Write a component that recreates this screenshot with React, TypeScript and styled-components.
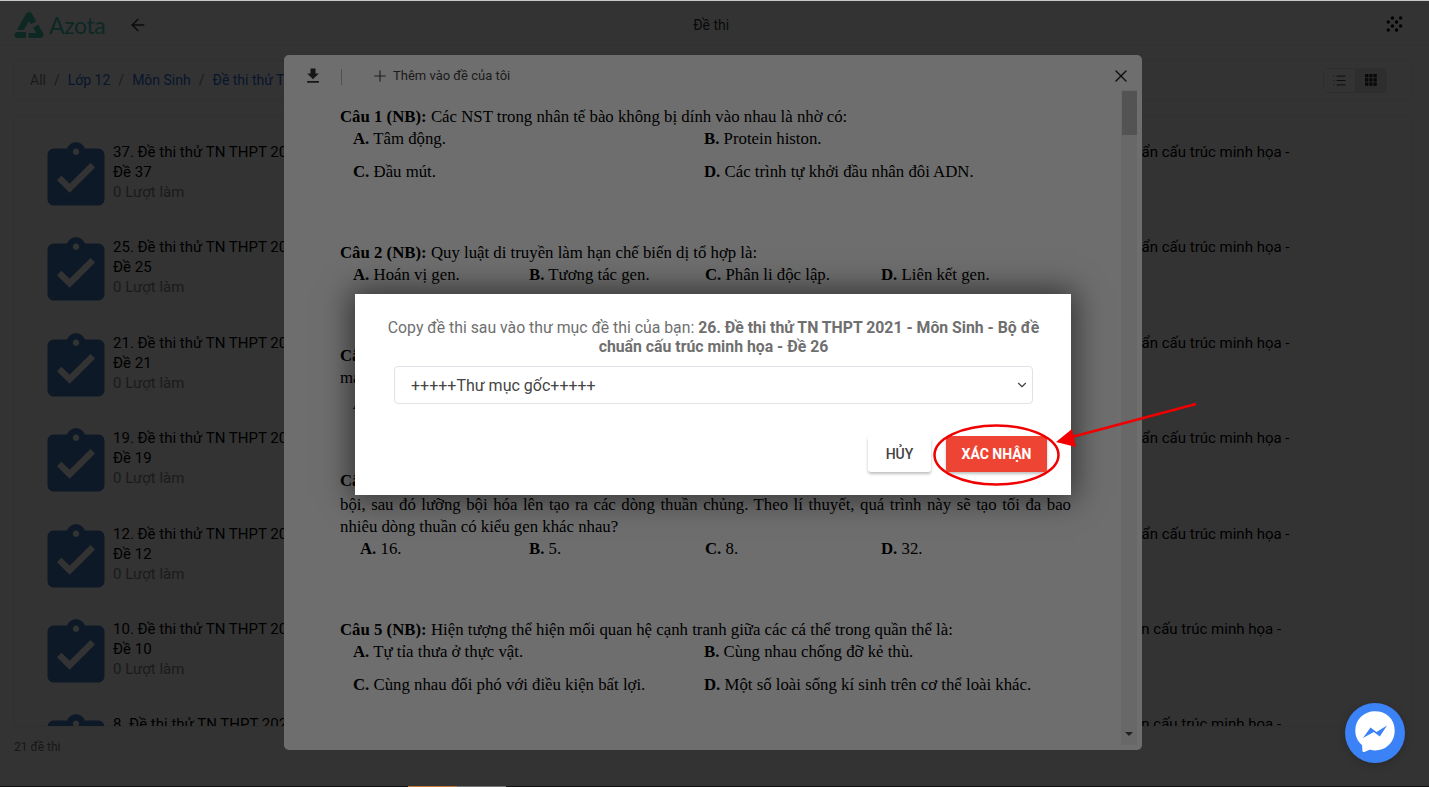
import React from "react";
import styled, { createGlobalStyle } from "styled-components";
import { ArrowLeft, Plus, X, List, ChevronDown } from "lucide-react";

const GlobalStyle = createGlobalStyle`
  html, body {
    margin: 0;
    padding: 0;
    height: 100%;
    overflow: hidden;
    background: #fff;
    font-family: Roboto, "Liberation Sans", sans-serif;
  }
  * { box-sizing: border-box; }
`;

const leftRows = [37, 25, 21, 19, 12, 10, 8];
const rightRows = [36, 26, 22, 20, 13, 9, 7];

function ClipboardIcon() {
  return (
    <svg width="76" height="76" viewBox="0 0 24 24" fill="currentColor">
      <path d="M19 3h-4.18C14.4 1.84 13.3 1 12 1c-1.3 0-2.4.84-2.82 2H5c-1.1 0-2 .9-2 2v14c0 1.1.9 2 2 2h14c1.1 0 2-.9 2-2V5c0-1.1-.9-2-2-2zm-7 0c.55 0 1 .45 1 1s-.45 1-1 1-1-.45-1-1 .45-1 1-1zm-2 14l-4-4 1.41-1.41L10 14.17l6.59-6.59L18 9l-8 8z" />
    </svg>
  );
}

function LogoMark() {
  return (
    <svg width="30" height="28" viewBox="0 0 30 28" fill="currentColor">
      <path d="M15 1c1.3 0 2.3.7 3 1.800l4.300 7.400-5.400 3.100-1.900-3.300-5.200 9-5.400 0C3 19 3.500 17.800 4 17L12 2.800C12.700 1.700 13.700 1 15 1z" />
      <path d="M1 22.500c-.6 1.100-.8 2-.2 3 .6 1 1.500 1.500 2.800 1.500H12v-6H2.200z" />
      <path d="M14.500 27H26c1.400 0 2.500-.5 3.200-1.600.6-1 .5-2.200-.1-3.300l-4.900-8.600-5.200 3 3.200 5.500h-7.700z" />
    </svg>
  );
}

function DotsIcon() {
  const dots: [number, number][] = [];
  for (let r = 0; r < 4; r++) {
    for (let c = 0; c < 4; c++) {
      if ((r + c) % 2 === 1) dots.push([c, r]);
    }
  }
  return (
    <svg width="18" height="18" viewBox="0 0 18 18" fill="currentColor">
      {dots.map(([c, r]) => (
        <circle key={`${c}-${r}`} cx={2.300 + c * 4.100} cy={2 + r * 4} r="1.700" />
      ))}
    </svg>
  );
}

function GridIcon() {
  const cells = [0, 1, 2, 3, 4, 5, 6, 7, 8];
  return (
    <svg width="12" height="12" viewBox="0 0 12 12" fill="currentColor">
      {cells.map((i) => (
        <rect key={i} x={(i % 3) * 4.200} y={Math.floor(i / 3) * 4.200} width="3.400" height="3.400" />
      ))}
    </svg>
  );
}

function ExamItem({ n }: { n: number }) {
  return (
    <Item>
      <IconSlot>
        <ClipboardIcon />
      </IconSlot>
      <ItemText>
        <ItemTitle>
          {n}. Đề thi thử TN THPT 2021 - Môn Sinh - Bộ đề chuẩn cấu trúc minh họa - Đề {n}
        </ItemTitle>
        <ItemMeta>0 Lượt làm</ItemMeta>
      </ItemText>
    </Item>
  );
}

export default function App() {
  return (
    <Page>
      <GlobalStyle />
      <Header>
        <Brand>
          <LogoMark />
          <BrandName>Azota</BrandName>
        </Brand>
        <BackButton>
          <ArrowLeft size={20} strokeWidth={1.6} />
        </BackButton>
        <HeaderTitle>Đề thi</HeaderTitle>
        <DotsSlot>
          <DotsIcon />
        </DotsSlot>
      </Header>

      <Breadcrumb>
        <Crumb>All</Crumb>
        <Slash>/</Slash>
        <CrumbLink>Lớp 12</CrumbLink>
        <Slash>/</Slash>
        <CrumbLink>Môn Sinh</CrumbLink>
        <Slash>/</Slash>
        <CrumbLink>Đề thi thử TN THPT 2021</CrumbLink>
        <ViewToggle>
          <ToggleButton>
            <List size={15} strokeWidth={1.5} />
          </ToggleButton>
          <ToggleButton $active>
            <GridIcon />
          </ToggleButton>
        </ViewToggle>
      </Breadcrumb>

      <ListCard>
        {leftRows.map((n, i) => (
          <React.Fragment key={n}>
            <ExamItem n={n} />
            <ExamItem n={rightRows[i]} />
          </React.Fragment>
        ))}
      </ListCard>
      <Footer>21 đề thi</Footer>

      <Backdrop $dim={0.535} $left={284} $top={55}>
        <Modal>
          <ModalBar>
            <BarIcon>
              <svg width="20" height="20" viewBox="0 0 24 24" fill="currentColor">
                <path d="M19 9h-4V3H9v6H5l7 7 7-7zM5 18v2h14v-2H5z" />
              </svg>
            </BarIcon>
            <BarDivider />
            <AddAction>
              <Plus size={18} strokeWidth={1.5} />
              <span>Thêm vào đề của tôi</span>
            </AddAction>
            <CloseAction>
              <X size={20} strokeWidth={1.6} />
            </CloseAction>
          </ModalBar>
          <Doc>
            <Question>
              <Line>
                <b>Câu 1 (NB):</b> Các NST trong nhân tế bào không bị dính vào nhau là nhờ có:
              </Line>
              <TwoCols>
                <Option><b>A.</b> Tâm động.</Option>
                <Option><b>B.</b> Protein histon.</Option>
              </TwoCols>
              <TwoCols $gap>
                <Option><b>C.</b> Đầu mút.</Option>
                <Option><b>D.</b> Các trình tự khởi đầu nhân đôi ADN.</Option>
              </TwoCols>
            </Question>
            <Question>
              <Line>
                <b>Câu 2 (NB):</b> Quy luật di truyền làm hạn chế biến dị tổ hợp là:
              </Line>
              <FourCols>
                <Option><b>A.</b> Hoán vị gen.</Option>
                <Option><b>B.</b> Tương tác gen.</Option>
                <Option><b>C.</b> Phân li độc lập.</Option>
                <Option><b>D.</b> Liên kết gen.</Option>
              </FourCols>
            </Question>
            <Question>
              <Line>
                <b>Câu 3 (TH):</b> Ở một loài thực vật, cho biết mỗi gen quy định một tính trạng,
              </Line>
              <Line>mang các cặp gen dị hợp tự thụ phấn thu được đời con.</Line>
              <FourCols $raised>
                <Option><b>A.</b> 1.</Option>
                <Option><b>B.</b> 2.</Option>
                <Option><b>C.</b> 3.</Option>
                <Option><b>D.</b> 4.</Option>
              </FourCols>
            </Question>
            <Question $tight>
              <Line>
                <b>Câu 4 (TH):</b> Một cây có kiểu gen dị hợp, người ta lấy hạt phấn nuôi cấy thành cây đơn
              </Line>
              <Line $lead>
                bội, sau đó lưỡng bội hóa lên tạo ra các dòng thuần chủng. Theo lí thuyết, quá trình này sẽ tạo tối đa bao
              </Line>
              <Line>nhiêu dòng thuần có kiểu gen khác nhau?</Line>
              <FourCols $indent>
                <Option><b>A.</b> 16.</Option>
                <Option><b>B.</b> 5.</Option>
                <Option><b>C.</b> 8.</Option>
                <Option><b>D.</b> 32.</Option>
              </FourCols>
            </Question>
            <Question>
              <Line>
                <b>Câu 5 (NB):</b> Hiện tượng thể hiện mối quan hệ cạnh tranh giữa các cá thể trong quần thể là:
              </Line>
              <TwoCols>
                <Option><b>A.</b> Tự tỉa thưa ở thực vật.</Option>
                <Option><b>B.</b> Cùng nhau chống đỡ kẻ thù.</Option>
              </TwoCols>
              <TwoCols $gap>
                <Option><b>C.</b> Cùng nhau đối phó với điều kiện bất lợi.</Option>
                <Option><b>D.</b> Một số loài sống kí sinh trên cơ thể loài khác.</Option>
              </TwoCols>
            </Question>
          </Doc>
          <ScrollTrack>
            <ScrollThumb />
            <ScrollArrow />
          </ScrollTrack>
        </Modal>
      </Backdrop>

      <Backdrop $dim={0.57} $left={355} $top={294}>
        <Dialog>
          <DialogText>
            Copy đề thi sau vào thư mục đề thi của bạn:{" "}
            <b>26. Đề thi thử TN THPT 2021 - Môn Sinh - Bộ đề chuẩn cấu trúc minh họa - Đề 26</b>
          </DialogText>
          <FolderSelect>
            <span>+++++Thư mục gốc+++++</span>
            <ChevronDown size={14} strokeWidth={2} />
          </FolderSelect>
          <DialogActions>
            <CancelButton>HỦY</CancelButton>
            <ConfirmButton>XÁC NHẬN</ConfirmButton>
          </DialogActions>
        </Dialog>
      </Backdrop>

      <Annotation width="1429" height="787" viewBox="0 0 1429 787">
        <ellipse cx="996.500" cy="455" rx="62" ry="29.500" fill="none" stroke="#f00000" strokeWidth="2.500" />
        <line x1="1196" y1="404" x2="1068" y2="438" stroke="#f00000" strokeWidth="2.500" />
        <polygon points="1056,442 1072,429 1076,447" fill="#f00000" />
      </Annotation>

      <Messenger>
        <svg width="60" height="60" viewBox="0 0 60 60">
          <path
            d="M30 8.300c-11 0-19.700 8.100-19.700 19.200 0 5.800 2.400 10.800 6.300 14.200.6.500.6 1 .6 1.700l.2 4.400c.1 1 1 1.500 2 1.100l4.600-2c.4-.2.900-.2 1.300-.1 1.500.4 3 .6 4.700.6 11 0 19.700-8.100 19.700-19.900S41 8.300 30 8.300z"
            fill="#fff"
          />
          <path d="M18 35l7.500-10.500 6 4.500L42 22.500 34.800 33.500l-6-4.600z" fill="#3b82f6" />
        </svg>
      </Messenger>

      <TopEdge />
      <BottomEdge>
        <EdgeSegment $color="#c47a3a" />
        <EdgeSegment $color="#777" />
      </BottomEdge>
    </Page>
  );
}

const Page = styled.div`
  position: relative;
  width: 1429px;
  height: 787px;
  overflow: hidden;
  background: #fff;
  color: #000;
  font-size: 14px;
`;

const Header = styled.header`
  display: flex;
  align-items: center;
  height: 46px;
  padding: 4px 25px 0 14px;
  position: relative;
  border-bottom: 1px solid #f2f2f2;
`;

const Brand = styled.div`
  display: flex;
  align-items: center;
  gap: 5px;
  color: #46c8b2;
`;

const BrandName = styled.span`
  font-family: Lato, sans-serif;
  font-size: 23px;
  font-weight: 400;
  letter-spacing: -0.4px;
`;

const BackButton = styled.div`
  display: flex;
  margin-left: 23px;
  color: #333;
`;

const HeaderTitle = styled.div`
  flex: 1;
  text-align: center;
  font-size: 14px;
  color: #333;
  padding-right: 112px;
`;

const DotsSlot = styled.div`
  display: flex;
  color: #000;
`;

const Breadcrumb = styled.nav`
  display: flex;
  align-items: center;
  height: 40px;
  margin: 14px 17px 0 13px;
  padding: 0 24px 0 16px;
  border: 1px solid #f2f2f2;
  border-radius: 4px;
  color: #888;
`;

const Crumb = styled.span`
  font-size: 14px;
`;

const CrumbLink = styled.span`
  font-size: 14px;
  color: #2a6ee0;
`;

const Slash = styled.span`
  margin: 0 8px;
  color: #888;
`;

const ViewToggle = styled.div`
  display: flex;
  margin-left: auto;
  height: 25px;
  border: 1px solid #e8e8e8;
  border-radius: 4px;
  overflow: hidden;
`;

const ToggleButton = styled.div<{ $active?: boolean }>`
  display: flex;
  align-items: center;
  justify-content: center;
  width: 31px;
  color: #333;
  background: ${(p) => (p.$active ? "#e6e6e6" : "#fff")};
`;

const ListCard = styled.section`
  display: grid;
  grid-template-columns: 685px 677px;
  grid-auto-rows: 95.400px;
  align-content: start;
  height: 611px;
  margin: 16px 17px 0 13px;
  padding: 21px 0 0 30px;
  border: 1px solid #f2f2f2;
  border-radius: 4px;
  overflow: hidden;
`;

const Item = styled.article`
  display: flex;
  align-items: flex-start;
`;

const IconSlot = styled.div`
  display: flex;
  flex: none;
  width: 75px;
  margin: 1px 0 0 -6px;
  color: #4a7cc0;

  svg {
    flex: none;
  }
`;

const ItemText = styled.div`
  width: 500px;
  margin-top: 4px;
  line-height: 20px;
  font-size: 15px;
`;

const ItemTitle = styled.div`
  color: #000;
`;

const ItemMeta = styled.div`
  color: #888;
`;

const Footer = styled.div`
  margin: 13px 0 0 14px;
  font-size: 12px;
  color: #777;
`;

const Backdrop = styled.div<{ $dim: number; $left: number; $top: number }>`
  position: absolute;
  inset: 0;
  display: flex;
  align-items: flex-start;
  padding: ${(p) => p.$top}px 0 0 ${(p) => p.$left}px;
  background: rgba(0, 0, 0, ${(p) => p.$dim});
`;

const Modal = styled.div`
  position: relative;
  display: flex;
  flex-direction: column;
  width: 858px;
  height: 695px;
  border-radius: 5px;
  background: #fff;
  overflow: hidden;
`;

const ModalBar = styled.div`
  display: flex;
  align-items: center;
  flex: none;
  height: 41px;
  padding: 0 11px 0 19px;
  color: #555;
`;

const BarIcon = styled.div`
  display: flex;
  color: #333;
`;

const BarDivider = styled.div`
  width: 1px;
  height: 16px;
  margin: 2px 0 0 18px;
  background: #bbb;
`;

const AddAction = styled.div`
  display: flex;
  align-items: center;
  gap: 4px;
  margin-left: 29px;
  font-size: 13px;
  color: #444;
`;

const CloseAction = styled.div`
  display: flex;
  margin-left: auto;
  color: #222;
`;

const Doc = styled.div`
  display: flex;
  flex-direction: column;
  gap: 59px;
  width: 731px;
  margin: 10px 0 0 56px;
  font-family: "Liberation Serif", serif;
  font-size: 16.800px;
  line-height: 22px;
  color: #000;

  b {
    font-weight: 700;
  }
`;

const Question = styled.div<{ $tight?: boolean }>`
  ${(p) => (p.$tight ? "margin-top: -4px;" : "")}
`;

const Line = styled.div<{ $lead?: boolean }>`
  white-space: nowrap;
  ${(p) => (p.$lead ? "margin-top: 2px; white-space: normal; text-align-last: justify;" : "")}
`;

const TwoCols = styled.div<{ $gap?: boolean }>`
  display: grid;
  grid-template-columns: 351px 351px;
  padding-left: 13px;
  ${(p) => (p.$gap ? "margin-top: 11px;" : "")}
`;

const FourCols = styled.div<{ $indent?: boolean; $raised?: boolean }>`
  display: grid;
  grid-template-columns: repeat(4, 176px);
  padding-left: 13px;
  ${(p) => (p.$indent ? "padding-left: 20px; grid-template-columns: 169px repeat(3, 176px);" : "")}
  ${(p) => (p.$raised ? "margin-top: 4px;" : "")}
`;

const Option = styled.div`
  white-space: nowrap;
`;

const ScrollTrack = styled.div`
  position: absolute;
  top: 35px;
  right: 5px;
  bottom: 5px;
  width: 16px;
  background: #f1f1f1;
`;

const ScrollThumb = styled.div`
  width: 15px;
  height: 44px;
  margin: 1px 0 0 1px;
  background: #c1c1c1;
`;

const ScrollArrow = styled.div`
  position: absolute;
  left: 4px;
  bottom: 9px;
  border-left: 4px solid transparent;
  border-right: 4px solid transparent;
  border-top: 4px solid #505050;
`;

const Dialog = styled.div`
  display: flex;
  flex-direction: column;
  width: 716px;
  height: 201px;
  padding: 25px 24px 0 25px;
  background: #fff;
  box-shadow: 0 0 28px 4px rgba(0, 0, 0, 0.55);
`;

const DialogText = styled.p`
  margin: 0;
  text-align: center;
  font-size: 15.800px;
  line-height: 18.500px;
  color: #6f6f6f;
`;

const FolderSelect = styled.div`
  display: flex;
  align-items: center;
  justify-content: space-between;
  flex: none;
  width: 639px;
  height: 38px;
  margin: 10px 0 0 14px;
  padding: 0 3px 0 16px;
  border: 1px solid #dfe2e6;
  border-radius: 4px;
  font-size: 16px;
  color: #444;
`;

const DialogActions = styled.div`
  display: flex;
  justify-content: flex-end;
  gap: 15px;
  margin-top: 32px;
`;

const ActionButton = styled.button`
  height: 36px;
  border: none;
  border-radius: 3px;
  font-family: Roboto, sans-serif;
  font-size: 14px;
  font-weight: 500;
  padding: 0;
  box-shadow: 0 2px 3px rgba(0, 0, 0, 0.25);
`;

const CancelButton = styled(ActionButton)`
  width: 63px;
  background: #fff;
  color: #444;
`;

const ConfirmButton = styled(ActionButton)`
  width: 101px;
  background: #ee4433;
  color: #fff;
  font-weight: 700;
`;

const Annotation = styled.svg`
  position: absolute;
  inset: 0;
  pointer-events: none;
`;

const Messenger = styled.div`
  position: absolute;
  left: 1345px;
  top: 703px;
  width: 60px;
  height: 60px;
  border-radius: 50%;
  background: #3b82f6;
  box-shadow: 0 2px 8px rgba(0, 0, 0, 0.2);
`;

const TopEdge = styled.div`
  position: absolute;
  top: 0;
  left: 0;
  right: 0;
  height: 1px;
  background: #c9c9c9;
`;

const BottomEdge = styled.div`
  position: absolute;
  left: 0;
  right: 0;
  bottom: 0;
  display: flex;
  height: 1px;
  padding-left: 408px;
  background: #111;
`;

const EdgeSegment = styled.div<{ $color: string }>`
  width: 49px;
  background: ${(p) => p.$color};
`;
